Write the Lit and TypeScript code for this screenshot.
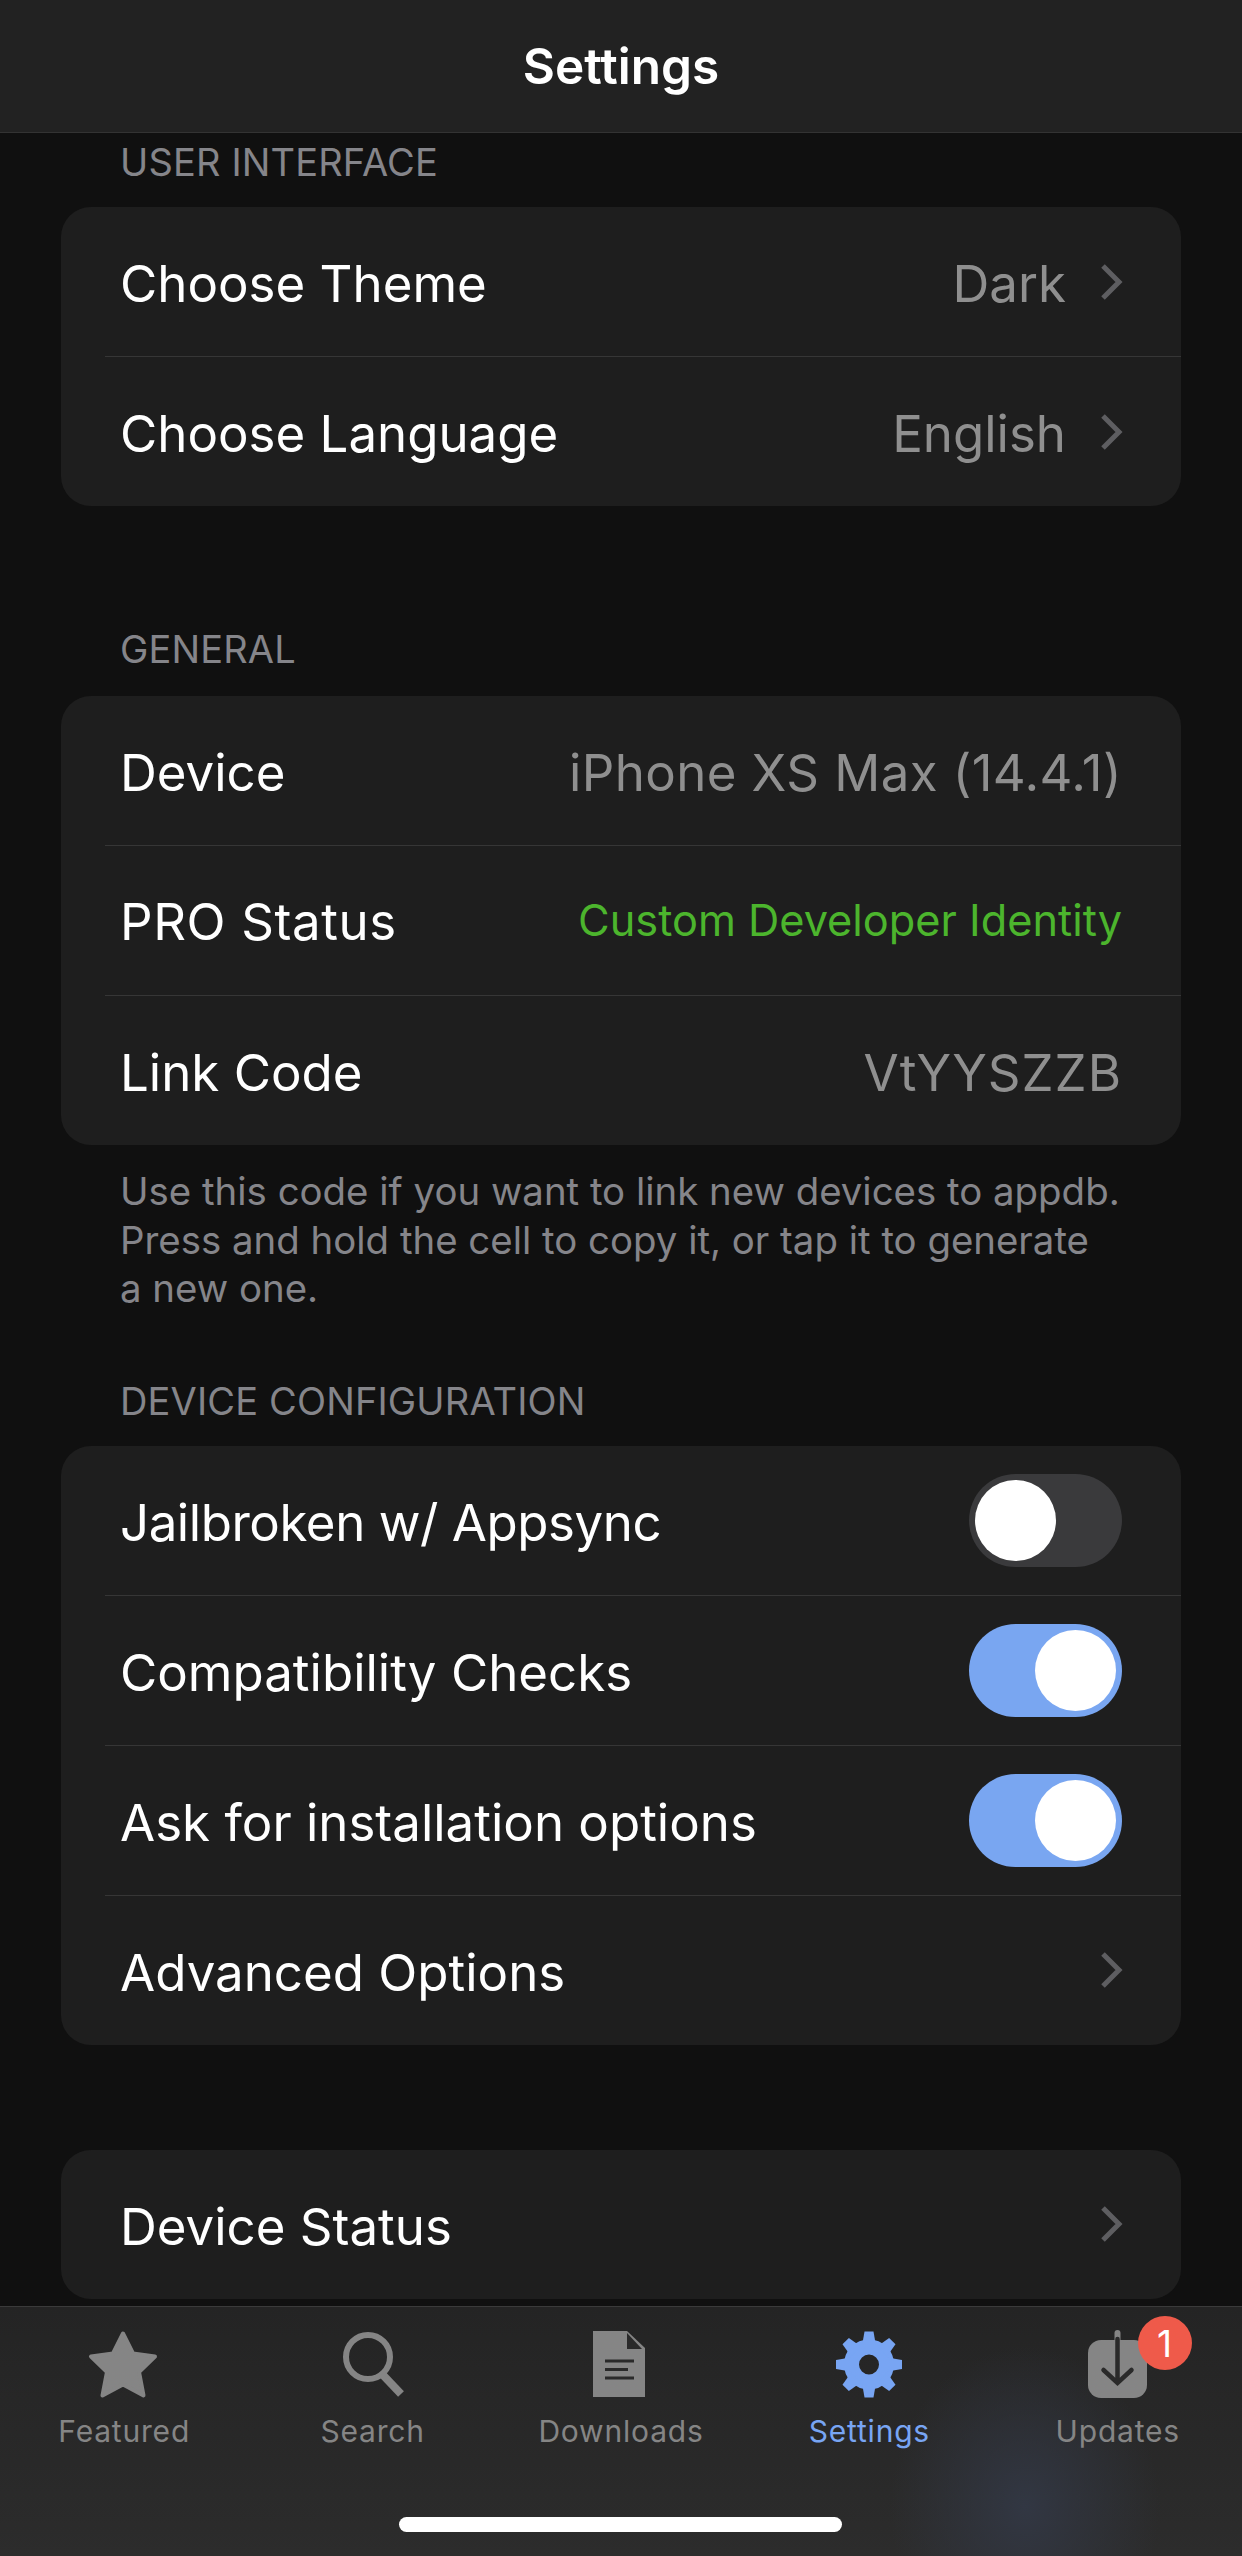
import { LitElement, html, css, svg } from "lit";
import { customElement } from "lit/decorators.js";

const chevron = html`<svg class="chev" viewBox="0 0 24 38"><path d="M4 3 L20 19 L4 35"/></svg>`;

const star = html`<svg class="ic" viewBox="0 0 80 70"><path d="M39 3.5 L49 23.500 L71 26.500 L55 42 L59.500 65.500 L39 54.500 L18.500 65.500 L23 42 L7 26.500 L29 23.500 Z" fill="#858585" stroke="#858585" stroke-width="4" stroke-linejoin="round"/></svg>`;
const search = html`<svg class="ic" viewBox="0 0 80 70"><circle cx="35" cy="27" r="22" fill="none" stroke="#858585" stroke-width="6"/><path d="M49 44 L68 64" stroke="#858585" stroke-width="8"/></svg>`;
const doc = html`<svg class="ic" viewBox="0 0 80 70"><path d="M12 1 H46 L64 18 V67 H12 Z" fill="#858585"/><path d="M46 3 V19 H61 Z" fill="#2a2a2a"/><path d="M24 31 H53 M24 39.500 H47 M24 48 H53" stroke="#2a2a2a" stroke-width="3"/></svg>`;
const gear = html`<svg class="ic" viewBox="0 0 80 70"><g fill="#78a5f3"><circle cx="40" cy="34.500" r="17.500" fill="none" stroke="#78a5f3" stroke-width="15"/>${[0, 45, 90, 135, 180, 225, 270, 315].map(
  (a) => svg`<path transform="rotate(${a} 40 34.500)" d="M33 16 L35.500 1.500 H44.500 L47 16 Z"/>`
)}</g></svg>`;
const updates = html`<svg class="ic" viewBox="0 0 80 70"><rect x="10" y="10" width="59" height="58" rx="13" fill="#858585"/><path d="M39.500 3 V10" stroke="#858585" stroke-width="6" stroke-linecap="round"/><path d="M39.500 9 V52 M25.500 40 L39.500 53 L53.500 40" fill="none" stroke="#2a2a2a" stroke-width="4.500" stroke-linecap="round"/></svg>`;

@customElement("app-root")
export class AppRoot extends LitElement {
  static styles = css`
    :host {
      display: block;
      width: 1242px;
      height: 2556px;
      overflow: hidden;
      background: #101010;
      font-family: Inter, "Liberation Sans", sans-serif;
      color: #fff;
    }
    .page { display: flex; flex-direction: column; height: 2556px; }
    .nav {
      height: 132px;
      flex: none;
      background: #222222;
      border-bottom: 1px solid #333333;
      display: flex;
      align-items: center;
      justify-content: center;
      font-size: 49.500px;
      font-weight: 600;
    }
    .scroll { flex: 1; min-height: 0; overflow: hidden; padding: 0 61px; }
    .label {
      font-size: 38px;
      color: #85858a;
      padding-left: 59px;
      line-height: 48px;
      letter-spacing: 0.15px;
    }
    .label.first { margin-top: 5px; margin-bottom: 21px; }
    .label.second { margin-top: 119px; margin-bottom: 23px; }
    .label.third { margin-top: 64px; margin-bottom: 21px; }
    .card { background: #1e1e1e; border-radius: 30px; overflow: hidden; }
    .card.last { margin-top: 105px; }
    .row {
      height: 149px;
      padding: 0 59px 0 59px;
      display: flex;
      align-items: center;
      justify-content: space-between;
      font-size: 51px;
    }
    .row + .row { border-top: 1px solid #363636; margin-left: 44px; padding-left: 15px; }
    .lbl { padding-top: 4px; }
    .lbl.wide { letter-spacing: 0.6px; padding-top: 1px; }
    .lbl.tight { letter-spacing: -0.45px; }
    .val { color: #8f8f8f; display: flex; align-items: center; }
    .vt { padding-top: 4px; }
    .vt.wide { letter-spacing: 0.4px; }
    .vt.wider { letter-spacing: 1px; }
    .vt.green { color: #4cb52d; font-size: 43.300px; padding: 0 0 2px; }
    .chev { width: 24px; height: 38px; margin-left: 33px; margin-right: -1px; fill: none; stroke: #5e5e61; stroke-width: 5; }
    .toggle { width: 153px; height: 93px; border-radius: 47px; background: #3a3a3c; position: relative; }
    .toggle.on { background: #79a6f1; }
    .knob { position: absolute; top: 6px; left: 6px; width: 81px; height: 81px; border-radius: 50%; background: #fff; }
    .toggle.on .knob { left: 66px; }
    .foot { font-size: 38.400px; line-height: 48.500px; color: #85858a; padding: 22px 0 0 59px; white-space: nowrap; }
    .tabs {
      height: 250px;
      flex: none;
      box-sizing: border-box;
      border-top: 1px solid #3a3a3a;
      background:
        radial-gradient(ellipse 135px 160px at 1025px 200px, #323743 0%, rgba(50,55,67,0.55) 45%, rgba(50,55,67,0) 100%),
        linear-gradient(#242424, #2c2c2c);
      position: relative;
      padding-top: 23px;
    }
    .tabgrid { display: grid; grid-template-columns: repeat(5, 1fr); }
    .tab { display: flex; flex-direction: column; align-items: center; color: #858585; font-size: 30px; letter-spacing: 0.8px; position: relative; }
    .tab.active { color: #78a5f3; }
    .ic { width: 80px; height: 70px; display: block; }
    .tab span.t { margin-top: 13px; line-height: 36px; }
    .badge {
      position: absolute;
      top: -14px;
      left: 144px;
      width: 54px;
      height: 54px;
      border-radius: 50%;
      background: #ef5a4a;
      color: #fff;
      font-size: 37px;
      letter-spacing: 0;
      display: flex;
      align-items: center;
      justify-content: center;
    }
    .home { position: absolute; left: 399px; top: 210px; width: 443px; height: 15px; border-radius: 8px; background: #fff; }
  `;

  private row(label: string, right: unknown, cls = "") {
    return html`<div class="row"><span class="lbl ${cls}">${label}</span>${right}</div>`;
  }
  private nav(label: string, value = "") {
    return this.row(label, html`<span class="val"><span class="vt">${value}</span>${chevron}</span>`);
  }
  private info(label: string, value: string, valCls = "", lblCls = "") {
    return this.row(label, html`<span class="val"><span class="vt ${valCls}">${value}</span></span>`, lblCls);
  }
  private toggle(label: string, on: boolean, cls = "") {
    return this.row(label, html`<div class="toggle ${on ? "on" : ""}"><div class="knob"></div></div>`, cls);
  }

  render() {
    return html`<div class="page">
      <div class="nav">Settings</div>
      <div class="scroll">
        <div class="label first">USER INTERFACE</div>
        <div class="card">${this.nav("Choose Theme", "Dark")}${this.nav("Choose Language", "English")}</div>
        <div class="label second">GENERAL</div>
        <div class="card">
          ${this.info("Device", "iPhone XS Max (14.4.1)", "wide")}
          ${this.info("PRO Status", "Custom Developer Identity", "green", "wide")}
          ${this.info("Link Code", "VtYYSZZB", "wider")}
        </div>
        <div class="foot">Use this code if you want to link new devices to appdb.<br />Press and hold the cell to copy it, or tap it to generate<br />a new one.</div>
        <div class="label third">DEVICE CONFIGURATION</div>
        <div class="card">
          ${this.toggle("Jailbroken w/ Appsync", false, "tight")}
          ${this.toggle("Compatibility Checks", true)}
          ${this.toggle("Ask for installation options", true)}
          ${this.nav("Advanced Options")}
        </div>
        <div class="card last">${this.nav("Device Status")}</div>
      </div>
      <div class="tabs">
        <div class="tabgrid">
          <div class="tab">${star}<span class="t">Featured</span></div>
          <div class="tab">${search}<span class="t">Search</span></div>
          <div class="tab">${doc}<span class="t">Downloads</span></div>
          <div class="tab active">${gear}<span class="t">Settings</span></div>
          <div class="tab">${updates}<span class="t">Updates</span><div class="badge">1</div></div>
        </div>
        <div class="home"></div>
      </div>
    </div>`;
  }
}
